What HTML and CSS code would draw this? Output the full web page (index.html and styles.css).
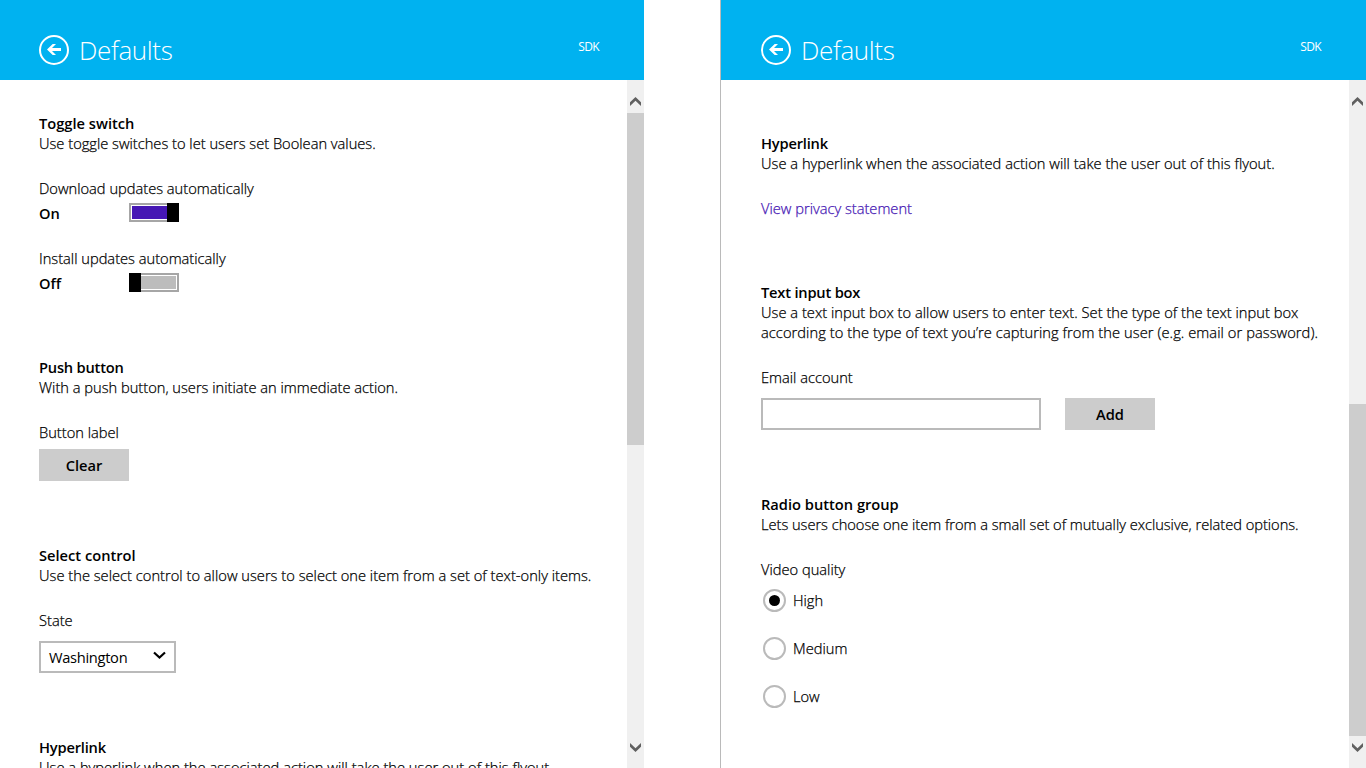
FILE: index.html
```html
<!DOCTYPE html>
<html lang="en">
<head>
<meta charset="utf-8">
<title>Defaults</title>
<link rel="stylesheet" href="styles.css">
</head>
<body>
<main class="stage">
  <section class="flyout">
    <header class="header">
      <svg class="back" width="32" height="32" viewBox="0 0 32 32"><circle cx="16" cy="16" r="14"/><path d="M9 15.5 14.7 10H18l-4 4H23v3H14l4 4H14.7Z"/></svg>
      <h1 class="title">Defaults</h1>
      <span class="brand">SDK</span>
    </header>
    <div class="body">
      <div class="content">
        <section class="group group-toggle">
          <h2>Toggle switch</h2>
          <p>Use toggle switches to let users set Boolean values.</p>
          <div class="label">Download updates automatically</div>
          <div class="switch-row"><b>On</b><span class="switch on"></span></div>
          <div class="label">Install updates automatically</div>
          <div class="switch-row"><b>Off</b><span class="switch off"></span></div>
        </section>
        <section class="group group-push">
          <h2 class="tight">Push button</h2>
          <p>With a push button, users initiate an immediate action.</p>
          <div class="label">Button label</div>
          <button class="button clear">Clear</button>
        </section>
        <section class="group group-select">
          <h2>Select control</h2>
          <p class="w-select">Use the select control to allow users to select one item from a set of text-only items.</p>
          <div class="label">State</div>
          <div class="select"><span>Washington</span><svg width="13" height="9" viewBox="0 0 13 9"><path d="m1 1.5 5.5 5 5.5-5"/></svg></div>
        </section>
        <section class="group group-link">
          <h2 class="tight">Hyperlink</h2>
          <p class="w-select">Use a hyperlink when the associated action will take the user out of this flyout.</p>
        </section>
      </div>
      <div class="scrollbar">
        <svg class="up" width="17" height="33" viewBox="0 0 17 33"><path d="M8.5 17 14 22.2V26L8.5 20.8 3 26V22.2Z"/></svg>
        <div class="thumb"></div>
        <svg class="down" width="17" height="32" viewBox="0 0 17 32"><path d="M8.5 16 14 10.8V7L8.5 12.2 3 7V10.8Z"/></svg>
      </div>
    </div>
  </section>
  <section class="flyout second">
    <header class="header">
      <svg class="back" width="32" height="32" viewBox="0 0 32 32"><circle cx="16" cy="16" r="14"/><path d="M9 15.5 14.7 10H18l-4 4H23v3H14l4 4H14.7Z"/></svg>
      <h1 class="title">Defaults</h1>
      <span class="brand">SDK</span>
    </header>
    <div class="body">
      <div class="content">
        <section class="group group-link">
          <h2 class="tight">Hyperlink</h2>
          <p class="w-select">Use a hyperlink when the associated action will take the user out of this flyout.</p>
          <a class="label link">View privacy statement</a>
        </section>
        <section class="group group-text">
          <h2 class="tight">Text input box</h2>
          <p><span class="w-select">Use a text input box to allow users to enter text. Set the type of the text input box</span><br><span class="loose">according to the type of text you’re capturing from the user (e.g. email or password).</span></p>
          <div class="label">Email account</div>
          <div class="field-row"><input class="input" type="text"><button class="button">Add</button></div>
        </section>
        <section class="group group-radio">
          <h2>Radio button group</h2>
          <p class="w-radio">Lets users choose one item from a small set of mutually exclusive, related options.</p>
          <div class="label">Video quality</div>
          <div class="radios">
            <div class="option"><span class="radio checked"></span>High</div>
            <div class="option"><span class="radio"></span>Medium</div>
            <div class="option"><span class="radio"></span>Low</div>
          </div>
        </section>
      </div>
      <div class="scrollbar end">
        <svg class="up" width="17" height="33" viewBox="0 0 17 33"><path d="M8.5 17 14 22.2V26L8.5 20.8 3 26V22.2Z"/></svg>
        <div class="thumb"></div>
        <svg class="down" width="17" height="32" viewBox="0 0 17 32"><path d="M8.5 16 14 10.8V7L8.5 12.2 3 7V10.8Z"/></svg>
      </div>
    </div>
  </section>
</main>
</body>
</html>
```
FILE: styles.css
```css
* { box-sizing: border-box; }
body { margin: 0; background: #fff; color: #000; font: 300 14.67px/20px "Open Sans", "Noto Sans", sans-serif; overflow: hidden; }
.stage { display: flex; justify-content: space-between; width: 1366px; height: 768px; overflow: hidden; }
.flyout { display: flex; flex-direction: column; width: 644px; height: 768px; }
.second { width: 646px; border-left: 1px solid #bababa; }
.header { display: flex; align-items: center; flex: none; height: 80px; padding: 20px 45px 0 38px; background: #00b2f0; color: #fff; }
.back { flex: none; }
.back circle { fill: none; stroke: #fff; stroke-width: 2; }
.back path { fill: #fff; }
.title { margin: 0 auto 0 9px; font-size: 26px; line-height: 36px; font-weight: 300; letter-spacing: -.35px; }
.brand { margin-top: -6px; font-size: 12px; line-height: 16px; font-weight: 400; letter-spacing: -.6px; }
.second .header { padding-left: 39px; }
.body { display: flex; flex: 1; min-height: 0; }
.content { flex: 1; min-width: 0; padding: 33px 0 0 39px; overflow: hidden; white-space: nowrap; }
.second .content { padding: 53px 0 0 40px; }
h2, p { margin: 0; font-size: inherit; line-height: 20px; }
h2, b { font-weight: 600; }
.tight { letter-spacing: -.2px; }
.loose { letter-spacing: .065px; }
.w-select { letter-spacing: .017px; }
.w-radio { letter-spacing: -.025px; }
p, .label, .option { -webkit-text-stroke: .25px currentColor; }
.group-toggle { height: 244px; }
.group-push { height: 188px; }
.group-select { height: 192px; }
.second .group-link { height: 149px; }
.group-text { height: 212px; }
.label { display: block; margin-top: 25px; }
.link { color: #4617b4; }
.switch-row { display: flex; height: 20px; margin-top: 5px; }
.switch-row b { width: 90px; }
.switch { width: 50px; height: 19px; border: 2px solid #a6a6a6; padding: 1px; background: #bcbcbc content-box; position: relative; }
.switch.on { background-color: #4617b4; }
.switch::after { content: ""; position: absolute; top: -2px; width: 12px; height: 19px; background: #000; }
.on::after { right: -2px; }
.off::after { left: -2px; }
.button { width: 90px; height: 32px; border: 0; padding: 1px 0 0; background: #ccc; color: #000; font: 600 14.67px/31px "Open Sans", sans-serif; }
.clear { display: block; margin-top: 7px; }
.select { display: flex; align-items: center; justify-content: space-between; width: 137px; height: 32px; margin-top: 11px; padding: 0 8px; border: 2px solid #bababa; font-weight: 400; }
.select span { margin-top: -1px; letter-spacing: -.3px; }
.select svg { margin-top: -3px; }
.select path { fill: none; stroke: #000; stroke-width: 2.2; }
.field-row { display: flex; gap: 24px; margin-top: 11px; }
.input { width: 280px; height: 32px; border: 2px solid #bababa; background: #fff; }
.radios { display: grid; gap: 25px; margin: 9px 0 0 2px; }
.option { display: flex; align-items: center; gap: 7px; height: 23px; }
.radio { display: grid; place-items: center; width: 23px; height: 23px; margin-top: 2px; border: 2px solid #bababa; border-radius: 50%; }
.checked::after { content: ""; width: 11px; height: 11px; border-radius: 50%; background: #000; }
.scrollbar { display: flex; flex-direction: column; flex: none; width: 17px; background: #f0f0f0; }
.scrollbar svg { flex: none; }
.scrollbar path { fill: #606060; }
.thumb { height: 332px; background: #cdcdcd; }
.down { margin-top: auto; }
.end .thumb { margin-top: auto; }
.end .down { margin-top: 0; }
```
